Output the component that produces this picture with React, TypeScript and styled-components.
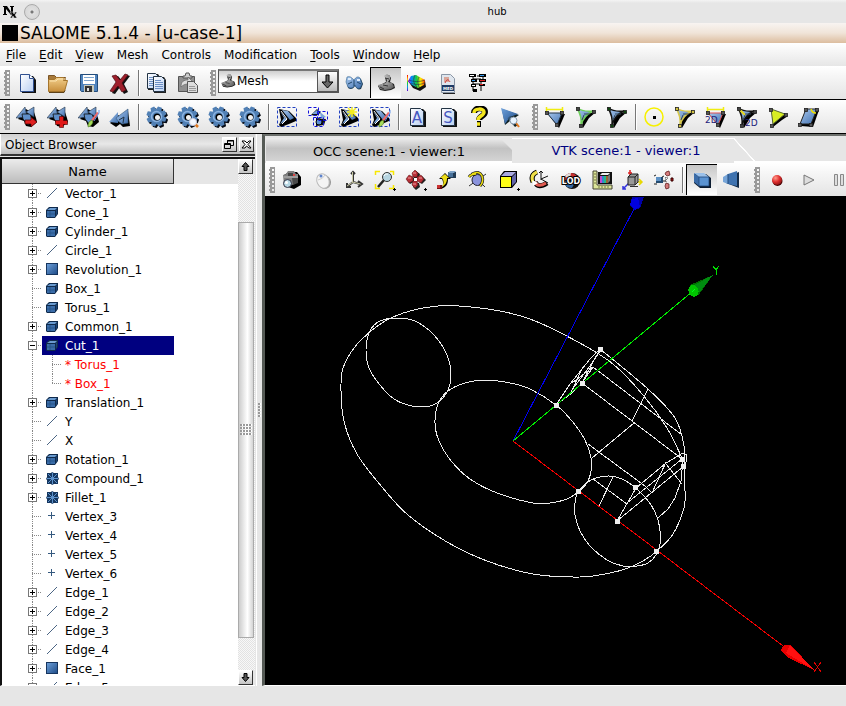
import React, { useState } from "react";
import styled, { createGlobalStyle, css } from "styled-components";

const GlobalStyle = createGlobalStyle`
  * { box-sizing: border-box; }
  html, body { margin: 0; padding: 0; }
  body {
    background: #e6e6e6;
    color: #000;
    font-family: "DejaVu Sans", sans-serif;
    font-size: 12px;
    overflow: hidden;
  }
  button, select { font: inherit; color: inherit; margin: 0; }
  ul { list-style: none; margin: 0; padding: 0; }
`;

/* ---------- frame ---------- */

const Shell = styled.div`
  display: flex;
  flex-direction: column;
  height: 100vh;
  background: #e6e6e6;
`;

const SessionBar = styled.header`
  display: grid;
  grid-template-columns: 59fr auto 41fr;
  align-items: center;
  height: 23px;
  flex: none;
  padding: 0 2px;
  background: linear-gradient(#f4f4f4, #e6e6e6 3px);
  font-size: 10px;
`;

const SessionIcons = styled.div`
  display: flex;
  align-items: center;
  gap: 6px;
`;

const RoundButton = styled.button`
  width: 16px;
  height: 16px;
  padding: 0;
  border: 1px solid #aaa;
  border-radius: 50%;
  background: radial-gradient(circle, #777 0 1px, #e0e0e0 2px, #d2d2d2 100%);
`;

const TitleBar = styled.div`
  display: flex;
  align-items: center;
  flex: none;
  gap: 2px;
  height: 20px;
  padding: 0 2px;
  background: linear-gradient(#f8f4f1, #f0e4d8 50%, #dcbd9f);
  h1 {
    margin: 0;
    font-size: 17px;
    line-height: 20px;
    font-weight: 400;
    white-space: nowrap;
  }
`;

const TitleSquare = styled.span`
  width: 16px;
  height: 16px;
  background: #000;
`;

const MenuBar = styled.nav`
  display: flex;
  align-items: center;
  flex: none;
  gap: 13px;
  height: 23px;
  padding: 0 6px;
  background: linear-gradient(#fff, #e6e6e6);
`;

const MenuItem = styled.button`
  padding: 0;
  border: 0;
  background: none;
  line-height: 20px;
  u { text-underline-offset: 2px; }
`;

const ToolbarRow = styled.div`
  display: flex;
  align-items: center;
  flex: none;
  gap: 2px;
  height: 34px;
  overflow: hidden;
  border-bottom: 1px solid #000;
  background: linear-gradient(#fff, #f6f6f6 30%, #e4e4e4);
`;

const ToolGroup = styled.div`
  display: flex;
  align-items: center;
  flex: none;
`;

const Grip = styled.span`
  width: 6px;
  height: 26px;
  margin: 0 2px 0 4px;
  background:
    linear-gradient(#999, #999) 0 0 / 2px 2px,
    #fff;
  background:
    conic-gradient(from 90deg at 1px 2px, transparent 270deg, #999 0) 0 0 / 6px 4px,
    conic-gradient(from 90deg at 2px 2px, transparent 270deg, #999 0) 0 0 / 6px 4px,
    conic-gradient(from 90deg at 2px 2px, transparent 270deg, #999 0) 3px 2px / 6px 4px;
`;

const Separator = styled.span`
  width: 2px;
  height: 26px;
  margin: 0 2px;
  background: linear-gradient(90deg, #777 50%, #fff 50%);
`;

const ToolButton = styled.button<{ $pressed?: boolean }>`
  display: flex;
  align-items: center;
  justify-content: center;
  flex: none;
  width: 31px;
  height: 31px;
  padding: 0 1px 0 0;
  border: 0;
  background: none;
  ${(p) =>
    p.$pressed &&
    css`
      border-left: 1px solid #000;
      border-top: 1px solid #000;
      background: linear-gradient(#c6c6c6, #fff);
    `}
`;

const Combo = styled.label`
  display: flex;
  align-items: center;
  width: 121px;
  height: 24px;
  border: 1px solid #555;
  border-top: 2px solid #777;
  background: linear-gradient(#cfcfcf, #fff 10px);
  select {
    flex: 1;
    min-width: 0;
    height: 20px;
    padding: 0;
    border: 0;
    outline: 0;
    appearance: none;
    background: transparent;
  }
`;

const ComboArrow = styled.span`
  display: flex;
  align-items: center;
  justify-content: center;
  align-self: stretch;
  width: 21px;
  border: 1px solid #555;
  background: linear-gradient(#fff, #bbb);
`;

const ComboWrap = styled.div`
  padding: 0 0 4px;
`;

const Work = styled.main`
  display: flex;
  flex: 1;
  min-height: 0;
`;

/* ---------- object browser ---------- */

const Dock = styled.section`
  display: flex;
  flex-direction: column;
  flex: none;
  width: 256px;
  padding-right: 1px;
`;

const DockTitle = styled.div`
  display: flex;
  align-items: center;
  flex: none;
  gap: 2px;
  height: 22px;
  padding: 1px 1px 0 4px;
  border-left: 1px solid #fff;
  border-bottom: 2px solid #333;
  background: linear-gradient(#d0d0d0, #e8e8e8 50%, #bcbcbc);
  h2 {
    flex: 1;
    margin: 0;
    font-size: 12px;
    line-height: 20px;
    font-weight: 400;
  }
`;

const SmallButton = styled.button`
  display: flex;
  align-items: center;
  justify-content: center;
  flex: none;
  width: 15px;
  height: 15px;
  padding: 0;
  border: 1px solid #333;
  border-left-color: #fff;
  border-top-color: #fff;
  background: linear-gradient(#fff, #c4c4c4);
`;

const TreeFrame = styled.div`
  display: flex;
  flex: 1;
  min-height: 0;
  margin-top: 1px;
  border-left: 2px solid #111;
  border-top: 2px solid #111;
  border-bottom: 1px solid #fff;
  background: #fff;
`;

const TreePane = styled.div`
  display: flex;
  flex-direction: column;
  flex: 1;
  min-width: 0;
  overflow: hidden;
`;

const TreeHeader = styled.div`
  flex: none;
  height: 25px;
  background: #e6e6e6;
  button {
    display: block;
    width: 172px;
    height: 25px;
    padding: 0;
    border: 0;
    border-right: 1px solid #333;
    border-bottom: 1px solid #333;
    background: linear-gradient(#ececec, #bcbcbc);
    font-size: 13px;
  }
`;

const dotsAcross = "repeating-linear-gradient(90deg, #888 0 1px, transparent 1px 2px)";
const dotsDown = "repeating-linear-gradient(#888 0 1px, transparent 1px 2px)";

const TreeRow = styled.li`
  display: grid;
  grid-template-columns: 26px 14px 132px;
  height: 19px;
`;

const Branch = styled.span<{ $child?: boolean }>`
  display: flex;
  align-items: center;
  grid-column: 1 / 3;
  grid-row: 1;
  height: 19px;
  padding-left: 26px;
  background: ${dotsDown} 30px 0 / 1px 19px no-repeat
    ${(p) => (p.$child ? "" : `, ${dotsAcross} 30px 9px / 10px 1px no-repeat`)};
`;

const Toggle = styled.button`
  display: block;
  width: 9px;
  height: 9px;
  padding: 0;
  border: 1px solid #777;
  background: #fff;
  svg { display: block; }
`;

const NodeLabel = styled.button<{ $selected?: boolean }>`
  display: flex;
  align-items: center;
  grid-column: 3;
  grid-row: 1;
  gap: 5px;
  height: 19px;
  padding: 0 0 0 3px;
  border: 0;
  background: ${(p) => (p.$selected ? "#000080" : "none")};
  color: ${(p) => (p.$selected ? "#fff" : "#000")};
  text-align: left;
  white-space: nowrap;
  svg { flex: none; }
`;

const ReferenceLabel = styled(NodeLabel)<{ $last?: boolean }>`
  padding-left: 23px;
  color: ${(p) => (p.$selected ? "#fff" : "#f00")};
  background:
    ${dotsDown} 10px 0 / 1px ${(p) => (p.$last ? "10px" : "19px")} no-repeat,
    ${dotsAcross} 10px 9px / 10px 1px no-repeat,
    ${(p) => (p.$selected ? "#000080" : "transparent")};
`;

const ScrollBar = styled.div`
  display: flex;
  flex-direction: column;
  flex: none;
  width: 17px;
  background: #e6e6e6;
`;

const Track = styled.div`
  display: grid;
  grid-template-rows: 48fr 416fr 32fr;
  flex: 1;
  background: repeating-conic-gradient(#f8f8f8 0 25%, #e2e2e2 0 50%) 0 0 / 2px 2px;
`;

const Thumb = styled.span`
  display: flex;
  align-items: center;
  justify-content: center;
  grid-row: 2;
  width: 16px;
  border: 1px solid #aaa;
  background: linear-gradient(90deg, #ccc, #fff 60%, #d4d4d4);
`;

const Dots = styled.span<{ $w: number; $h: number }>`
  width: ${(p) => p.$w}px;
  height: ${(p) => p.$h}px;
  background:
    linear-gradient(90deg, #999 2px, transparent 2px) 0 0 / 3px 3px,
    #fff;
  mask: linear-gradient(#000 2px, transparent 2px) 0 0 / 3px 3px;
`;

const Splitter = styled.div`
  display: flex;
  align-items: center;
  justify-content: center;
  flex: none;
  width: 6px;
  background: linear-gradient(90deg, #fff 1px, #e6e6e6 1px);
`;

/* ---------- viewer ---------- */

const Viewer = styled.section`
  display: flex;
  flex-direction: column;
  flex: 1;
  min-width: 0;
  border-left: 3px solid #555a55;
  border-top: 2px solid #6c706c;
  border-bottom: 1px solid #fff;
`;

const TabStrip = styled.div`
  display: flex;
  flex: none;
  height: 27px;
  padding: 2px 0 0 1px;
  background: #e6e6e6;
`;

const Tab = styled.button`
  flex: none;
  width: 246px;
  border: 0;
  border-bottom: 2px solid #fff;
  padding: 3px 0 0;
  background: linear-gradient(#ececec, #c2c2c2 45%, #d4d4d4);
  clip-path: polygon(0 0, 234px 0, 100% 12px, 100% 100%, 0 100%);
  font-size: 13px;
`;

const ActiveTab = styled(Tab)`
  width: 222px;
  padding: 0 0 1px 6px;
  border: 0;
  border-top: 1px solid #fff;
  clip-path: none;
  background: none;
  color: #000080;
`;

const TabRest = styled.span`
  flex: 1;
  border-bottom: 2px solid #fff;
  background: linear-gradient(to bottom left, #e6e6e6 49%, #fff 50% 53%, #e6e6e6 54%) 0 0 / 22px 24px no-repeat;
`;

const Scene = styled.svg`
  display: block;
  flex: 1;
  width: 100%;
  min-height: 0;
  background: #000;
`;

const StatusBar = styled.footer`
  flex: none;
  height: 20px;
  background: #e6e6e6;
`;

const Hidden = styled.svg`
  position: absolute;
  width: 0;
  height: 0;
`;

/* ---------- icons ---------- */

const Ico = ({ children }: { children: React.ReactNode }) => (
  <svg width="22" height="22" viewBox="0 0 22 22" aria-hidden="true">
    {children}
  </svg>
);

const SharedPaint = () => (
  <Hidden aria-hidden="true">
    <defs>
      <linearGradient id="blue" x1="0" y1="0" x2="1" y2="1">
        <stop offset="0" stopColor="#a9c8ee" />
        <stop offset="1" stopColor="#3f6fae" />
      </linearGradient>
      <linearGradient id="deep" x1="0" y1="0" x2="1" y2="1">
        <stop offset="0" stopColor="#6fa2dc" />
        <stop offset="1" stopColor="#1d4a86" />
      </linearGradient>
      <linearGradient id="page" x1="0" y1="0" x2="1" y2="1">
        <stop offset="0" stopColor="#fff" />
        <stop offset="1" stopColor="#b9cff2" />
      </linearGradient>
      <linearGradient id="wood" x1="0" y1="0" x2="0" y2="1">
        <stop offset="0" stopColor="#f3d08c" />
        <stop offset="1" stopColor="#c88f3c" />
      </linearGradient>
      <linearGradient id="rain" x1="0" y1="0" x2="0" y2="1">
        <stop offset="0" stopColor="#f00" />
        <stop offset=".3" stopColor="#fd0" />
        <stop offset=".5" stopColor="#1c3" />
        <stop offset=".75" stopColor="#09e" />
        <stop offset="1" stopColor="#60c" />
      </linearGradient>
      <linearGradient id="rainx" x1="0" y1="0" x2="1" y2="0">
        <stop offset="0" stopColor="#c0f" />
        <stop offset=".2" stopColor="#08f" />
        <stop offset=".5" stopColor="#1c4" />
        <stop offset=".75" stopColor="#fe0" />
        <stop offset="1" stopColor="#f30" />
      </linearGradient>
      <radialGradient id="redball" cx=".35" cy=".3" r=".8">
        <stop offset="0" stopColor="#ff9a8a" />
        <stop offset=".5" stopColor="#e03030" />
        <stop offset="1" stopColor="#801010" />
      </radialGradient>
      <radialGradient id="grayball" cx=".35" cy=".3" r=".9">
        <stop offset="0" stopColor="#ccc" />
        <stop offset="1" stopColor="#555" />
      </radialGradient>
    </defs>
  </Hidden>
);

const NewIcon = () => (
  <Ico>
    <path d="M6 4h11l3 4v13H6z" fill="#111" />
    <path d="M4.500 2.500h9l4 4v13h-13z" fill="url(#page)" stroke="#2f4f8f" />
    <path d="M13.500 2.500v4h4" fill="#fff" stroke="#2f4f8f" />
  </Ico>
);
const OpenIcon = () => (
  <Ico>
    <path d="M1.500 3.500h6l2 2h9v5h-17z" fill="#a87a3a" stroke="#7a5528" />
    <path d="M1.500 19.500v-12h6l2-2h7v3h4l-3 11z" fill="url(#wood)" stroke="#a5752c" />
    <path d="M3 9h6l2-2h8" stroke="#fbe3b0" fill="none" />
    <path d="M2 20.500h15l1-2" stroke="#5e4219" fill="none" />
  </Ico>
);
const SaveIcon = () => (
  <Ico>
    <path d="M2.500 2.500h17v17h-16l-1-1z" fill="#4f83bd" stroke="#234d7c" />
    <path d="M5 3h12v9H5z" fill="#fff" />
    <path d="M6 5.500h10M6 8.500h10" stroke="#7fa6cf" />
    <path d="M6 13h10v7H6z" fill="#c8c8b8" />
    <path d="M7 14h7v6H7z" fill="#333" />
    <path d="M9 16h2v3H9z" fill="#ddd" />
  </Ico>
);
const DeleteIcon = () => (
  <Ico>
    <path d="M4 4l4-1 4 5 5-6 3 1-6 8 4 8-4 2-4-7-5 7-3-1 6-9z" fill="#111" transform="translate(1 1)" />
    <path d="M3 4l4-1 4 5 5-6 3 1-6 8 4 7-4 2-4-6-5 6-3-1 6-9z" fill="#9e1f2b" stroke="#4d0c12" strokeWidth=".7" />
  </Ico>
);
const Doc = ({ x, y }: { x: number; y: number }) => (
  <g transform={`translate(${x} ${y})`}>
    <path d="M1 1h10l2 3v13H1z" fill="#222" />
    <path d="M.5.5h8l3 3v12H.5z" fill="url(#page)" stroke="#234" />
    <path d="M2 4.500h6M2 6.500h8M2 8.500h8M2 10.500h8M2 12.500h8" stroke="#6c8fc4" />
  </g>
);
const CopyIcon = () => <Ico><Doc x={1} y={1} /><Doc x={7} y={4} /></Ico>;
const PasteIcon = () => (
  <Ico>
    <path d="M1.500 4.500h16v15h-16z" fill="#909090" stroke="#555" />
    <path d="M6 6V4h2l1-3h3l1 3h2v2z" fill="#ccc" stroke="#555" />
    <path d="M4 15c0-6 3-7 7-7V5l5 5-5 5v-3c-3 0-5 1-7 3z" fill="#ddd" stroke="#666" strokeWidth=".7" />
    <path d="M10.500 9.500h6l4 4v7h-10z" fill="#ddd" stroke="#555" />
    <path d="M12 14.500h6M12 16.500h7M12 18.500h7" stroke="#999" />
  </Ico>
);
const MeshModuleIcon = ({ w = 22 }: { w?: number }) => (
  <svg width={w} height={w} viewBox="0 0 22 22" aria-hidden="true">
    <path d="M10 4l4-1 2 3-1 4 4 2 1 4-4 2-6 1-5-1-2-4 4-2 4-2z" fill="#222" />
    <path d="M9 4l3-2 3 2v3l-2 3 4 1 2 4-3 2-6 1-5-1-2-4 4-1 4-1 1-3z" fill="url(#grayball)" />
    <path d="M10 6l4 1M8 13l5 1M5 15l4 2" stroke="#333" />
  </svg>
);
const ButterflyIcon = () => (
  <Ico>
    <path d="M5 6c3-1 4 0 6 3 2-3 4-4 7-2l2 5-2 5c-3 1-4 0-6-3-2 3-4 4-7 2l-1-5z" fill="#1e3850" />
    <path d="M4 5c3-1 4 0 7 3 2-3 4-4 6-2l2 6-2 4c-2 1-4 0-5-3-2 3-4 4-7 2l-2-5z" fill="url(#blue)" stroke="#32648e" strokeWidth=".6" />
    <path d="M5 7h3M14 8h3" stroke="#dcebfa" strokeWidth="2" />
    <path d="M11 8v6M5 12l4-2M18 12l-4-2" stroke="#214668" />
  </Ico>
);
const PostIcon = () => (
  <Ico>
    <path d="M2 3h1v16H2z" fill="url(#rain)" />
    <path d="M3 8l7-5 10 5 1 6-6 4-7-3z" fill="#111" transform="translate(0 1)" />
    <path d="M3 9l3-5 5-1 9 5-1 5-6 3-6-3z" fill="url(#rainx)" />
    <path d="M4 8c4 2 11 2 16 0M6 11c4 2 9 2 13 0M10 3c-2 4-2 8 2 12M14 5c-2 4-1 7 0 10" stroke="#234" strokeWidth=".6" fill="none" />
  </Ico>
);
const MedIcon = () => (
  <Ico>
    <path d="M5.500 2.500h9l4 4v14h-13z" fill="#dfe6ee" stroke="#8a96a5" />
    <path d="M8 5h5v5H8z" fill="#d9a79a" /><path d="M9 11c2-5 4-3 5-1" stroke="#c33" fill="none" />
    <path d="M6 13h12v6H6z" fill="#1e3a66" />
    <text x="7" y="18" fontSize="4" fontWeight="700" fill="#fff">MED</text>
    <path d="M7 21.500h12" stroke="#222" />
  </Ico>
);
const SchemeIcon = () => (
  <Ico>
    <path d="M6 4v15M6 7h8v12M10 4h6v4M6 12h7M14 13h4" stroke="#000" fill="none" />
    <path d="M2 2h7v3H2zM12 2h7v3h-7zM4 7h6v3H4zM12 7h7v3h-7zM4 12h5v3H4zM12 12h6v2h-6zM6 17h4v3H6z" fill="#000" />
    <path d="M3 3h4v1H3zM5 13h3v1H5z" fill="#fff" />
    <path d="M13 3h4v1h-4zM5 8h3v1H5z" fill="#39e" /><path d="M13 8h5v1h-5zM13 12h3v1h-3z" fill="#d22" />
  </Ico>
);

const Peaks = () => (
  <>
    <path d="M1 12L9 2l3 2 4-2 3 9 1 4-6 5-5-1-2-5z" fill="#000" transform="translate(1 1)" />
    <path d="M0 12L9 1l2 10z" fill="url(#blue)" stroke="#234" strokeWidth=".6" />
    <path d="M6 8h8l2 5-4 6-5-6z" fill="#5f8fc9" stroke="#111" strokeWidth=".8" />
    <path d="M10 6l8-5v10z" fill="url(#blue)" stroke="#234" strokeWidth=".6" />
  </>
);
const PeakArrowIcon = () => (
  <Ico><Peaks /><path d="M9 14h6v-3l6 5-6 5v-3H9z" fill="#e02020" stroke="#400" strokeWidth=".7" /></Ico>
);
const PeakPlusIcon = () => (
  <Ico><Peaks /><path d="M12.500 10.500h4v4h4v4h-4v3h-4v-3h-4v-4h4z" fill="#e01818" stroke="#400" strokeWidth=".6" /></Ico>
);
const Brush = () => (
  <>
    <path d="M19 6l2 1-6 8-2-1z" fill="#ee6a6a" /><path d="M21 4v3l-5 8" stroke="#69e" fill="none" />
    <path d="M10 21c0-4 1-6 4-7l1 2c-1 3-2 4-5 5z" fill="#a6dc5a" stroke="#3a6a10" strokeWidth=".5" />
  </>
);
const PeakBrushIcon = () => <Ico><Peaks /><Brush /></Ico>;
const TwinPeakIcon = () => (
  <Ico>
    <path d="M1 16L9 8l3 2 7-6 2 15-7 1-3-3-4 3z" fill="#000" transform="translate(0 1)" />
    <path d="M0 16L9 6v11z" fill="url(#blue)" /><path d="M7 12l12-9v14l-6 1-4-3z" fill="url(#blue)" stroke="#357" strokeWidth=".6" />
    <path d="M10 14l5-3-1 6" fill="none" stroke="#234" />
  </Ico>
);

const teeth = [0, 45, 90, 135, 180, 225, 270, 315];
const GearShape = ({ fill }: { fill: string }) => (
  <g fill={fill}>
    {teeth.map((a) => <path key={a} d="M9 1h4l1 4H8z" transform={`rotate(${a + 20} 11 11)`} />)}
    <circle cx="11" cy="11" r="7" />
  </g>
);
const GearIcon = ({ lens }: { lens?: boolean }) => (
  <Ico>
    <g transform="translate(1 1)"><GearShape fill="#050a14" /></g>
    <g transform="translate(-.5 -.5)"><GearShape fill="#5180b5" /></g>
    <circle cx="10.500" cy="10.500" r="5" fill="none" stroke="#8bb2e0" strokeWidth="1.500" />
    <circle cx="11" cy="11" r="3.500" fill="#000" /><circle cx="11.500" cy="11.500" r="2.500" fill="#f2f2f2" />
    {lens && <><path d="M18 18l3 3" stroke="#e07820" strokeWidth="2.500" /><circle cx="16" cy="16" r="3.500" fill="#f4f8ff" stroke="#ccd" /></>}
  </Ico>
);

const DashBox = () => (
  <rect x="1.500" y="1.500" width="19" height="19" fill="none" stroke="#2040c0" strokeDasharray="3 2" />
);
const Dart = () => (
  <>
    <path d="M3 3l10 2 7 7v3l-7 3-8 3-2-2 2-5z" fill="#000" />
    <path d="M4 5l4 7-4 6 7-4z" fill="#7ba5d9" /><path d="M6 4l6 1 6 7-4 2z" fill="url(#blue)" />
    <path d="M5 5l6 8-5 5" fill="none" stroke="#fff" />
  </>
);
const GroupIcon = () => <Ico><DashBox /><Dart /></Ico>;
const GroupsIcon = () => (
  <Ico>
    <path d="M4 9l6-6 4 4-5 3zM9 12l10 1-2 6-8 1z" fill="#111" /><path d="M5 8l5-4 3 4zM13 6l6 5-5 2z" fill="#7ba5d9" />
    <circle cx="12" cy="16" r="3" fill="#5d8fd0" stroke="#000" />
    <path d="M1.500 1.500h10v8h-10zM10.500 5.500h10v9h-10zM6.500 11.500h10v9h-10z" fill="none" stroke="#11d" strokeDasharray="3 2" />
  </Ico>
);
const GroupStarIcon = () => (
  <Ico><DashBox /><Dart /><path d="M14 1v10M9 6h10M10 2l8 8M18 2l-8 8" stroke="#f4ee20" strokeWidth="1.500" /></Ico>
);
const GroupBrushIcon = () => <Ico><DashBox /><Dart /><Brush /></Ico>;
const LetterIcon = ({ ch }: { ch: string }) => (
  <Ico>
    <path d="M6 3h11l3 3v15H6z" fill="#111" />
    <path d="M4.500 2.500h10l3 3v14h-13z" fill="url(#page)" stroke="#234" />
    <text x="11" y="17" textAnchor="middle" fontSize="15" fill="#4658c0">{ch}</text>
  </Ico>
);
const HelpIcon = () => (
  <Ico>
    <g fill="none" strokeLinejoin="round">
      <path d="M6 7c0-6 11-6 11-1 0 4-6 4-6 8M9 18h4" stroke="#000" strokeWidth="6" />
      <path d="M6 7c0-5 10-5 10-1 0 4-6 4-6 8M9 18h3" stroke="#f3e51c" strokeWidth="3.500" />
    </g>
  </Ico>
);
const MeshInfoIcon = () => (
  <Ico>
    <path d="M3 3l17 6-6 4 5 6-3 2-5-6-5 4z" fill="#122" />
    <path d="M2 2l17 6-8 3-5 7z" fill="url(#deep)" /><path d="M10 11l6 7" stroke="#357" strokeWidth="4" />
    <path d="M17 17l3 4" stroke="#e07820" strokeWidth="2" />
    <circle cx="14.500" cy="14.500" r="3.500" fill="#e8f4ff" stroke="#89a" />
  </Ico>
);

const Node = ({ x, y, c = "#555" }: { x: number; y: number; c?: string }) => (
  <rect x={x - 1.5} y={y - 1.5} width="3" height="3" fill={c} stroke="#222" strokeWidth=".8" />
);
type TriProps = { edge?: string; label?: string; node?: string; line?: string };
const DownTriIcon = ({ edge = "#234", label }: TriProps) => (
  <Ico>
    <path d="M2 3.500h17M2.500 1v5M18.500 1v5" stroke="#f0ec10" strokeWidth="1.500" />
    <path d="M4 8h17l-6 14z" fill="#000" /><path d="M3 7h15l-5 12z" fill="url(#blue)" stroke={edge} />
    <Node x={3} y={7} /><Node x={18} y={7} /><Node x={13} y={19} />
    {label && <text x="0" y="17" fontSize="9" fill="#22227a">{label}</text>}
  </Ico>
);
const CurveTriIcon = ({ edge = "#111", node = "#444", line, label }: TriProps) => (
  <Ico>
    <path d="M3 3l6 4 12-2-7 6-6 10-1-9z" fill="#000" transform="translate(0 1)" />
    <path d="M2 2q6 4 16 3-9 4-12 14Q7 10 2 2z" fill="url(#blue)" stroke={edge} strokeWidth="1.500" />
    {line && <path d="M3 3l6 6" stroke={line} strokeWidth="2" />}
    <path d="M9 8l6 0M9 9l-2 5" stroke="#345" />
    <Node x={3} y={3} c={node} /><Node x={19} y={6} c={node} /><Node x={6} y={20} c={node} />
    {label && <text x="9" y="20" fontSize="9" fill="#22227a">{label}</text>}
  </Ico>
);
const CircleDotIcon = () => (
  <Ico><circle cx="11" cy="11" r="9" fill="none" stroke="#f6f000" strokeWidth="1.500" /><path d="M10 10h3v3h-3z" /></Ico>
);
const YellowTriIcon = () => (
  <Ico>
    <path d="M5 4l16 6-6 4-9 7z" fill="#000" /><path d="M4 3l14 5-12 10z" fill="#d8ee22" stroke="#563" />
    <Node x={4} y={4} /><Node x={19} y={9} /><Node x={5} y={20} />
  </Ico>
);
const QuadIcon = () => (
  <Ico>
    <path d="M3 20L9 4h12l-6 17z" fill="#000" /><path d="M2 18L8 3h11l-6 15z" fill="url(#blue)" stroke="#222" />
    <path d="M13 3q1 4 5 4" fill="none" stroke="#f0e000" strokeWidth="1.500" />
    <Node x={8} y={4} /><Node x={19} y={4} /><Node x={2} y={19} /><Node x={13} y={19} />
  </Ico>
);

const CameraIcon = () => (
  <Ico>
    <path d="M3 6l5-3h8l4 5v8l-7 4-9-3z" fill="#000" />
    <path d="M2 6l3-1 2-3h6l2 3h2v8l-6 3H3z" fill="#808080" />
    <path d="M3 8h14" stroke="#bbb" /><path d="M7 4h5v3H7z" fill="#444" /><path d="M12 5h2v2h-2z" fill="#d44" />
    <path d="M11 9h6v5l-5 2z" fill="#4a4a4a" />
    <circle cx="6.500" cy="14.500" r="4" fill="#b8d8e4" stroke="#334" /><circle cx="5.500" cy="13.500" r="1.500" fill="#fff" />
  </Ico>
);
const MouseIcon = () => (
  <Ico>
    <ellipse cx="12" cy="13" rx="6.500" ry="7" fill="#999" transform="rotate(-25 12 12)" />
    <ellipse cx="11" cy="12" rx="6" ry="7.500" fill="#f4f4f4" stroke="#bbb" transform="rotate(-25 11 12)" />
    <circle cx="9" cy="7" r="1.500" fill="#5d83cc" /><path d="M6 11q5-1 7-5" stroke="#ccc" fill="none" />
  </Ico>
);
const TriadIcon = () => (
  <Ico>
    <g fill="none">
      <path d="M10 3v10l7 2M10 13l-5 4M8 5l2-2 2 2M15 12l4 3-4 3M4 14v4h4" stroke="#333" strokeWidth="2" />
      <path d="M9.500 3v10l8 2M10 13l-6 4" stroke="#c8c8a4" />
    </g>
  </Ico>
);
const FitIcon = () => (
  <Ico>
    <path d="M1.500 6V2.500H6M16 2.500h3.500V6M1.500 15v4.500H6M15 19.500h4.500V16" fill="none" stroke="#f8e800" strokeWidth="1.500" />
    <path d="M10 11l-6 7" stroke="#222" strokeWidth="2.500" />
    <circle cx="13" cy="8" r="4.500" fill="#b6d5e2" stroke="#333" /><path d="M10 7q1-3 4-2" stroke="#fff" fill="none" />
    <path d="M19 20.500h3M20.500 19v3" stroke="#000" />
  </Ico>
);
const PanIcon = () => (
  <Ico>
    <path d="M10 1l4 3-1 4h-5L7 4zM10 20l-3-3 1-4h5l1 4zM1 10l3-4 4 2v4l-4 2zM20 10l-4-4-3 2v4l3 2z" fill="#222" transform="translate(1 1)" />
    <path d="M10 1l3 3-1 4H8L7 4zM10 19l-3-3 1-4h4l1 4zM1 10l3-4 4 2v4l-4 2zM19 10l-3-4-4 2v4l4 2z" fill="#b83038" stroke="#511" strokeWidth=".5" />
    <path d="M8 4h3M3 9h3M14 9h3M8 15h3" stroke="#f0a0a0" /><path d="M9 9h3v3H9z" fill="#fff" />
    <path d="M19 20.500h3M20.500 19v3" stroke="#000" />
  </Ico>
);
const MovePointIcon = () => (
  <Ico>
    <path d="M12 3h8v6h-8z" fill="#223c55" /><path d="M12 4l2-2h6l-2 2z" fill="#7fa4c8" /><path d="M12 4h5v4h-5z" fill="#48729b" />
    <path d="M3 10l6-6 6 6h-3c0 6-2 8-7 10 2-3 3-6 1-10z" fill="#000" /><path d="M4 9l5-4 4 4h-2c0 5-2 7-5 9 2-4 2-6 0-9z" fill="#ecdc18" />
    <path d="M1 16h5v4H1z" fill="#701010" /><path d="M1 16h3v3H1z" fill="#c33" />
  </Ico>
);
const RotateIcon = () => (
  <Ico>
    <path d="M2 17L19 5M4 4l14 14" stroke="#333" /><circle cx="10.500" cy="11" r="5.500" fill="#8a93dc" stroke="#223" />
    <path d="M5 5Q12 1 15 7q2 6-2 10M2 8q2-3 7-3" fill="none" stroke="#222" strokeWidth="3" />
    <path d="M5 5Q12 1 15 7q2 6-2 10M2 8q2-3 7-3" fill="none" stroke="#eadc10" strokeWidth="1.500" />
  </Ico>
);
const CubeYellowIcon = () => (
  <Ico>
    <path d="M2 7l4-5h13v11l-5 6H2z" fill="#000" />
    <path d="M3 7l4-4h11l-4 4z" fill="#aaaadf" /><path d="M14 8l4-4v9l-4 4z" fill="#6265a8" /><path d="M3 8h10v10H3z" fill="#ffff18" />
    <path d="M19 20.500h3M20.500 19v3" stroke="#000" />
  </Ico>
);
const SpinIcon = () => (
  <Ico>
    <path d="M12 11V2M12 10l7-3M12 10l7 4M10 4l2-2 2 2" stroke="#111" fill="none" />
    <path d="M8 3Q1 6 4 13" fill="none" stroke="#000" strokeWidth="5" /><path d="M8 3Q1 6 4 13" fill="none" stroke="#efdf48" strokeWidth="3" />
    <path d="M6 13Q9 20 18 14" fill="none" stroke="#000" strokeWidth="5" /><path d="M6 13Q9 19 17 14" fill="none" stroke="#e05a50" strokeWidth="3" />
    <path d="M3 11l6 3-5 3z" fill="#fff" />
  </Ico>
);
const LodIcon = () => (
  <Ico>
    <circle cx="12" cy="12" r="8" fill="#111" /><path d="M4 11a7 7 0 0 1 14 0z" fill="#c83030" /><path d="M4 12a7 7 0 0 0 8 7l4-7z" fill="#3568a0" />
    <path d="M5 8a7 7 0 0 1 6-4l-1 5z" fill="#ddd" />
    <text x="11" y="15" textAnchor="middle" fontSize="8" fontWeight="700" fill="#fff" stroke="#000" strokeWidth="2" paintOrder="stroke">LOD</text>
  </Ico>
);
const RulerIcon = () => (
  <Ico>
    <path d="M2 2h4v14h15v4H2z" fill="#dce69a" stroke="#443" /><path d="M7 3h14v12H7z" fill="#111" />
    <path d="M9 6l2-2h8l-2 2z" fill="#eee" />
    <path d="M9 7h2v7H9z" fill="#c34ad0" /><path d="M11 7h2v7h-2z" fill="#38c" /><path d="M13 7h2v7h-2z" fill="#2b8" /><path d="M15 7h2v7h-2z" fill="#963" />
    <path d="M17 7l2-2v7l-2 2z" fill="#777" />
    <path d="M3 5h2M3 8h2M3 11h2M3 14h2M8 19v-2M11 19v-2M14 19v-2M17 19v-2" stroke="#774" />
  </Ico>
);
const AxesIcon = () => (
  <Ico>
    <path d="M8 1v7M6 4h4" stroke="#d22" strokeWidth="1.500" /><path d="M1 20l7-7M1 17v3h3" stroke="#33d" fill="none" strokeWidth="1.500" />
    <path d="M14 13h6M17 10l3 3-3 3" stroke="#e8d800" strokeWidth="1.500" fill="none" />
    <path d="M6 8l3-3h7v8l-3 3H6z" fill="#999" stroke="#222" /><path d="M6 8h7v8M13 8l3-3" stroke="#222" fill="none" />
    <path d="M8 17.500h8" stroke="#333" />
  </Ico>
);
const ScatterIcon = () => (
  <Ico>
    <path d="M3 8h7v6H3z" fill="#234b70" /><path d="M3 8h5v4H3z" fill="#5d91c4" /><path d="M1 7l2-1M1 15h3M11 7l-2 1M10 12h3" stroke="#222" />
    <path d="M13 3l3-1 1 4-3 1-2-2zM13 14l3 1v4l-3 1-1-3z" fill="#d57a7a" stroke="#511" strokeWidth=".7" />
    <path d="M18 9h2v3h-2z" fill="#c01818" stroke="#300" /><path d="M12 9h4M13 8v6M12 12l3-3" stroke="#555" strokeDasharray="1 1" />
  </Ico>
);
const BlueCubeIcon = () => (
  <Ico>
    <path d="M4 5h11l5 4v10H9l-6-5z" fill="#0c1c30" /><path d="M3 4h10l5 4H8z" fill="#9ac0ea" /><path d="M3 4l5 4v9l-5-4z" fill="#3b6ca8" />
    <path d="M8 8h10v9H8z" fill="#5a93d2" stroke="#1c4478" strokeWidth=".8" />
  </Ico>
);
const PerspectiveIcon = () => (
  <Ico>
    <path d="M3 8L17 3v16L4 14z" fill="#132b48" transform="translate(1 0)" /><path d="M2 8l5-3v10l-5-2z" fill="#77a5d8" />
    <path d="M7 5l9-3v15l-9-2z" fill="#3f73b0" /><path d="M7 5v10" stroke="#224a7c" />
  </Ico>
);
const RecordIcon = () => <Ico><circle cx="11.500" cy="12" r="5" fill="#400" /><circle cx="11" cy="11" r="5" fill="url(#redball)" /></Ico>;
const PlayIcon = () => <Ico><path d="M7 6l10 5-10 5z" fill="#ddd" stroke="#777" /></Ico>;
const PauseIcon = () => <Ico><path d="M6.500 5.500h3v11h-3zM12.500 5.500h3v11h-3z" fill="#ddd" stroke="#888" /></Ico>;

const Arrow = ({ down }: { down?: boolean }) => (
  <svg width="11" height="11" viewBox="0 0 11 11" aria-hidden="true">
    <path d="M5.500 1.500L9 5.500H7v4H4v-4H2z" fill="#555" stroke="#000" transform={down ? "rotate(180 5.500 5.500)" : undefined} />
  </svg>
);

/* ---------- tree ---------- */

type Kind = "line" | "solid" | "face" | "compound" | "vertex";

const KindIcon = ({ kind }: { kind: Kind }) => (
  <svg width="15" height="15" viewBox="0 0 15 15" aria-hidden="true">
    {kind === "line" && <path d="M2 12L12 2" stroke="#4b6584" />}
    {kind === "solid" && (
      <>
        <path d="M1 5l3-3h9v7l-3 4H2L1 12z" fill="#0f2a4c" /><path d="M2 5l3-2h7l-2 2z" fill="#6a9bd0" />
        <path d="M2 6h8v6H2z" fill="#3a6ca8" /><path d="M11 5l1-1v5l-1 2z" fill="#1d4474" /><path d="M5 6v6M2 9h8" stroke="#275489" />
      </>
    )}
    {kind === "face" && <rect x="1.500" y="1.500" width="11" height="11" fill="url(#deep)" stroke="#16355f" />}
    {kind === "compound" && (
      <>
        <path d="M2 2h4l1-1 2 1h4v4l1 2-1 1v4H9l-2 1-1-1H2V9L1 8l1-2z" fill="#153760" />
        <path d="M3 3l9 9M12 3l-9 9M7.500 2v11M2 7.500h11" stroke="#5d92cc" fill="none" />
      </>
    )}
    {kind === "vertex" && <path d="M3 6.500h7M6.500 3v7" stroke="#35597f" />}
  </svg>
);

type Item = { name: string; kind: Kind; open?: "+" | "-"; child?: "mid" | "last" };

const items: Item[] = [
  { name: "Vector_1", kind: "line", open: "+" },
  { name: "Cone_1", kind: "solid", open: "+" },
  { name: "Cylinder_1", kind: "solid", open: "+" },
  { name: "Circle_1", kind: "line", open: "+" },
  { name: "Revolution_1", kind: "face", open: "+" },
  { name: "Box_1", kind: "solid" },
  { name: "Torus_1", kind: "solid" },
  { name: "Common_1", kind: "solid", open: "+" },
  { name: "Cut_1", kind: "solid", open: "-" },
  { name: "* Torus_1", kind: "solid", child: "mid" },
  { name: "* Box_1", kind: "solid", child: "last" },
  { name: "Translation_1", kind: "solid", open: "+" },
  { name: "Y", kind: "line" },
  { name: "X", kind: "line" },
  { name: "Rotation_1", kind: "solid", open: "+" },
  { name: "Compound_1", kind: "compound", open: "+" },
  { name: "Fillet_1", kind: "compound", open: "+" },
  { name: "Vertex_3", kind: "vertex" },
  { name: "Vertex_4", kind: "vertex" },
  { name: "Vertex_5", kind: "vertex" },
  { name: "Vertex_6", kind: "vertex" },
  { name: "Edge_1", kind: "line", open: "+" },
  { name: "Edge_2", kind: "line", open: "+" },
  { name: "Edge_3", kind: "line", open: "+" },
  { name: "Edge_4", kind: "line", open: "+" },
  { name: "Face_1", kind: "face", open: "+" },
  { name: "Edge_5", kind: "line", open: "+" },
];

const ObjectBrowser = () => {
  const [selected, setSelected] = useState("Cut_1");
  return (
    <Dock>
      <DockTitle>
        <h2>Object Browser</h2>
        <SmallButton aria-label="Float">
          <svg width="11" height="11" viewBox="0 0 11 11"><path d="M3.500 4V1.500h6v5H7M3 2h7M.5 4.500h6v5h-6zM0 5.500h7" fill="none" stroke="#000" /></svg>
        </SmallButton>
        <SmallButton aria-label="Close">
          <svg width="11" height="11" viewBox="0 0 11 11"><path d="M1 2h3l2 2 2-2h2L7 5.500 10 9H8L5.500 7 4 9H1l3-3.500z" fill="#fff" stroke="#000" /></svg>
        </SmallButton>
      </DockTitle>
      <TreeFrame>
        <TreePane>
          <TreeHeader><button>Name</button></TreeHeader>
          <ul>
            {items.map((it) => (
              <TreeRow key={it.name}>
                <Branch $child={!!it.child}>
                  {it.open && (
                    <Toggle aria-label={it.open === "+" ? `Expand ${it.name}` : `Collapse ${it.name}`}>
                      <svg width="7" height="7" viewBox="0 0 7 7">
                        <path d={it.open === "+" ? "M1 3.500h5M3.500 1v5" : "M1 3.500h5"} stroke="#000" />
                      </svg>
                    </Toggle>
                  )}
                </Branch>
                {it.child ? (
                  <ReferenceLabel
                    $selected={selected === it.name}
                    $last={it.child === "last"}
                    onClick={() => setSelected(it.name)}
                  >
                    {it.name}
                  </ReferenceLabel>
                ) : (
                  <NodeLabel $selected={selected === it.name} onClick={() => setSelected(it.name)}>
                    <KindIcon kind={it.kind} />
                    {it.name}
                  </NodeLabel>
                )}
              </TreeRow>
            ))}
          </ul>
        </TreePane>
        <ScrollBar>
          <SmallButton aria-label="Scroll up"><Arrow /></SmallButton>
          <Track><Thumb><Dots $w={12} $h={12} /></Thumb></Track>
          <SmallButton aria-label="Scroll down"><Arrow down /></SmallButton>
        </ScrollBar>
      </TreeFrame>
    </Dock>
  );
};

/* ---------- 3D scene, in window coordinates ---------- */

type Pt = [number, number];

/* Catmull-Rom spline through the points, closed on itself when asked. */
const spline = (flat: number[], closed: boolean) => {
  const pts: Pt[] = [];
  for (let i = 0; i < flat.length; i += 2) pts.push([flat[i], flat[i + 1]]);
  const n = pts.length;
  const at = (i: number): Pt => (closed ? pts[(i + n) % n] : pts[Math.max(0, Math.min(n - 1, i))]);
  let d = `M${pts[0].join(" ")}`;
  for (let i = 0; i < (closed ? n : n - 1); i++) {
    const [a, b, c, e] = [at(i - 1), at(i), at(i + 1), at(i + 2)];
    d += `C${b[0] + (c[0] - a[0]) / 6} ${b[1] + (c[1] - a[1]) / 6} ${c[0] - (e[0] - b[0]) / 6} ${c[1] - (e[1] - b[1]) / 6} ${c[0]} ${c[1]}`;
  }
  return d;
};

const curves = [
  spline([682, 457, 667, 427, 643, 394, 613, 363, 578, 341, 530, 318, 488, 308, 438, 305, 393, 316, 362, 338, 345, 362, 341, 383, 344, 420, 357, 453, 382, 486, 408, 514, 447, 541, 487, 560, 533, 573, 580, 576, 610, 572, 628, 567, 643, 560, 657, 550, 673, 533, 684, 507, 685, 490, 684, 465, 684, 445, 675, 417, 648, 388, 600, 348], false),
  spline([380, 320, 398, 317, 415, 320, 431, 331, 443, 346, 450, 364, 450, 383, 442, 398, 430, 405, 412, 405, 394, 398, 380, 384, 369, 367, 366, 348, 370, 330], true),
  spline([448, 390, 465, 382, 485, 379, 510, 382, 530, 388, 556, 404, 572, 420, 585, 439, 591, 457, 591, 470, 587, 482, 578, 491, 567, 498, 550, 502, 533, 502, 497, 492, 470, 478, 452, 461, 439, 440, 435, 422, 438, 403], true),
  spline([578, 491, 591, 479, 608, 475, 622, 478, 636, 487, 649, 501, 657, 516, 660, 530, 660, 543, 656, 554, 648, 562, 637, 565, 623, 565, 607, 559, 590, 545, 580, 530, 575, 514, 575, 502], true),
];

const edges = [
  "M600 348 590 358 582 368 570 383 556 404 M600 350 590 365 572 389 M600 348 582 382 M583 366 571 391 M593 366 572 382 M593 366 582 382 M556 404 572 392 582 382",
  "M593 366 682 434 M582 382 682 458 M648 388 632 420 M634 422 592 457 M588 443 645 485 652 492",
  "M617 520 636 487 M617 520 684 465 M627 502 682 458 M636 487 666 462 683 452 687 454 686 461 684 465",
  "M652 492 666 461 M613 476 599 505 M593 478 627 503 M666 463 682 483 M683 458 681 480 675 497 668 508 658 517",
];

const vertices: Pt[] = [[600, 348], [582, 382], [556, 404], [682, 458], [683, 465], [635, 486], [617, 520], [578, 490], [656, 550]];

const SceneView = () => (
  <Scene role="img" aria-label="VTK scene">
    <g transform="translate(-265 -196)" shapeRendering="crispEdges">
      {[...curves, ...edges].map((d) => <path key={d} d={d} fill="none" stroke="#ececec" />)}
      <path d="M513 440L635 206" stroke="#0000f0" />
      <path d="M513 440L693 290" stroke="#00ee00" />
      <path d="M513 440L787 648" stroke="#f00000" />
      {vertices.map(([x, y]) => <rect key={`${x}-${y}`} x={x - 2} y={y - 2} width="5" height="5" fill="#eee" />)}
      <path d="M632 196h12l-4 11-5 2-5-4z" fill="#0000a8" />
      <path d="M632 198l6-1 2 9-5 3-5-5z" fill="#0000e0" />
      <path d="M690 284L713 274 698 295z" fill="#006c00" />
      <path d="M694 284L713 274 699 292z" fill="#008c10" />
      <ellipse cx="693.500" cy="290" rx="5" ry="6" fill="#00c400" transform="rotate(-20 693 290)" />
      <path d="M692 291l3-3" stroke="#00ff20" />
      <path d="M781 649l3-5 7 0L814 669 787 656z" fill="#e80000" />
      <path d="M790 644L814 669 786 652z" fill="#ff1010" />
      <path d="M713 265l3 4 3-4M716 269v5" fill="none" stroke="#00e000" />
      <path d="M814 661l7 10M821 661l-7 10" fill="none" stroke="#e00000" />
    </g>
  </Scene>
);

/* ---------- page ---------- */

type Tool = [string, React.ReactNode, boolean?];
const Tools = ({ list }: { list: Tool[] }) => (
  <>
    {list.map(([label, icon, pressed]) => (
      <ToolButton key={label} aria-label={label} $pressed={pressed}>{icon}</ToolButton>
    ))}
  </>
);

const menus: [string, boolean][] = [
  ["File", true], ["Edit", true], ["View", true], ["Mesh", false], ["Controls", false],
  ["Modification", false], ["Tools", true], ["Window", true], ["Help", true],
];

export default function App() {
  return (
    <Shell>
      <GlobalStyle />
      <SharedPaint />
      <SessionBar>
        <SessionIcons>
          <svg width="16" height="14" viewBox="0 0 16 14" aria-label="NX">
            <path d="M1 1h4l4 6V2H8V1h4v1h-1v8H9L4 4v5h1v1H1V9h1V2H1z" />
            <path d="M8 7h3l1 2 1-2h2l-2 3 2 3h-3l-1-2-1 2H8l2-3z" stroke="#e6e6e6" strokeWidth=".5" />
          </svg>
          <RoundButton aria-label="Session" />
        </SessionIcons>
        <span>hub</span>
      </SessionBar>
      <TitleBar><TitleSquare /><h1>SALOME 5.1.4 - [u-case-1]</h1></TitleBar>
      <MenuBar>
        {menus.map(([m, mark]) => (
          <MenuItem key={m}>{mark ? <><u>{m[0]}</u>{m.slice(1)}</> : m}</MenuItem>
        ))}
      </MenuBar>
      <ToolbarRow>
        <ToolGroup>
          <Grip />
          <Tools list={[["New", <NewIcon />], ["Open", <OpenIcon />], ["Save", <SaveIcon />], ["Delete", <DeleteIcon />]]} />
          <Separator />
          <Tools list={[["Copy", <CopyIcon />], ["Paste", <PasteIcon />]]} />
        </ToolGroup>
        <ToolGroup>
          <Grip />
          <ComboWrap>
            <Combo>
              <MeshModuleIcon w={18} />
              <select aria-label="Module" defaultValue="Mesh"><option>Mesh</option><option>Geometry</option></select>
              <ComboArrow>
                <svg width="13" height="15" viewBox="0 0 13 15" aria-hidden="true"><path d="M5 1h3v7h4l-5.500 6L1 8h4z" fill="#666" stroke="#000" /></svg>
              </ComboArrow>
            </Combo>
          </ComboWrap>
          <Tools list={[["Geometry", <ButterflyIcon />], ["Mesh module", <MeshModuleIcon />, true], ["Post-Pro", <PostIcon />], ["MED", <MedIcon />], ["YACS", <SchemeIcon />]]} />
        </ToolGroup>
      </ToolbarRow>
      <ToolbarRow>
        <ToolGroup>
          <Grip />
          <Tools list={[["Create mesh", <PeakArrowIcon />], ["Create sub-mesh", <PeakPlusIcon />], ["Edit mesh", <PeakBrushIcon />], ["Build compound", <TwinPeakIcon />]]} />
          <Separator />
          <Tools list={[["Compute", <GearIcon />], ["Preview", <GearIcon lens />], ["Order", <GearIcon />], ["Evaluate", <GearIcon />]]} />
          <Separator />
          <Tools list={[["Create group", <GroupIcon />], ["Group operations", <GroupsIcon />], ["Group from geometry", <GroupStarIcon />], ["Edit group", <GroupBrushIcon />]]} />
          <Separator />
          <Tools list={[["Advanced information", <LetterIcon ch="A" />], ["Standard information", <LetterIcon ch="S" />], ["Element information", <HelpIcon />], ["Find element", <MeshInfoIcon />]]} />
        </ToolGroup>
        <ToolGroup>
          <Grip />
          <Tools list={[["Length", <DownTriIcon />], ["Free edges", <CurveTriIcon edge="#6fd05a" />], ["Free borders", <CurveTriIcon node="#141" />]]} />
          <Separator />
          <Tools
            list={[
              ["Free nodes", <CircleDotIcon />],
              ["Borders at multi-connection", <CurveTriIcon edge="#d8c84a" node="#cfc040" />],
              ["Length 2D", <DownTriIcon edge="#e05050" label="2D" />],
              ["Connection 2D", <CurveTriIcon line="#e8d820" label="2D" />],
              ["Area", <YellowTriIcon />],
              ["Skew", <QuadIcon />],
            ]}
          />
        </ToolGroup>
      </ToolbarRow>
      <Work>
        <ObjectBrowser />
        <Splitter><Dots $w={3} $h={14} /></Splitter>
        <Viewer>
          <TabStrip role="tablist">
            <Tab role="tab" aria-selected={false}>OCC scene:1 - viewer:1</Tab>
            <ActiveTab role="tab" aria-selected>VTK scene:1 - viewer:1</ActiveTab>
            <TabRest />
          </TabStrip>
          <ToolbarRow>
            <ToolGroup>
              <Grip />
              <Tools
                list={[
                  ["Dump view", <CameraIcon />], ["Mouse style", <MouseIcon />], ["Trihedron", <TriadIcon />],
                  ["Fit all", <FitIcon />], ["Pan", <PanIcon />], ["Rotation point", <MovePointIcon />],
                  ["Rotate", <RotateIcon />], ["Front", <CubeYellowIcon />], ["Reset", <SpinIcon />],
                  ["Level of detail", <LodIcon />], ["Scaling", <RulerIcon />], ["Graduated axes", <AxesIcon />],
                  ["View parameters", <ScatterIcon />],
                ]}
              />
              <Separator />
              <Tools list={[["Parallel", <BlueCubeIcon />, true], ["Perspective", <PerspectiveIcon />]]} />
            </ToolGroup>
            <ToolGroup>
              <Grip />
              <Tools list={[["Record", <RecordIcon />], ["Play", <PlayIcon />], ["Pause", <PauseIcon />]]} />
            </ToolGroup>
          </ToolbarRow>
          <SceneView />
        </Viewer>
      </Work>
      <StatusBar />
    </Shell>
  );
}
